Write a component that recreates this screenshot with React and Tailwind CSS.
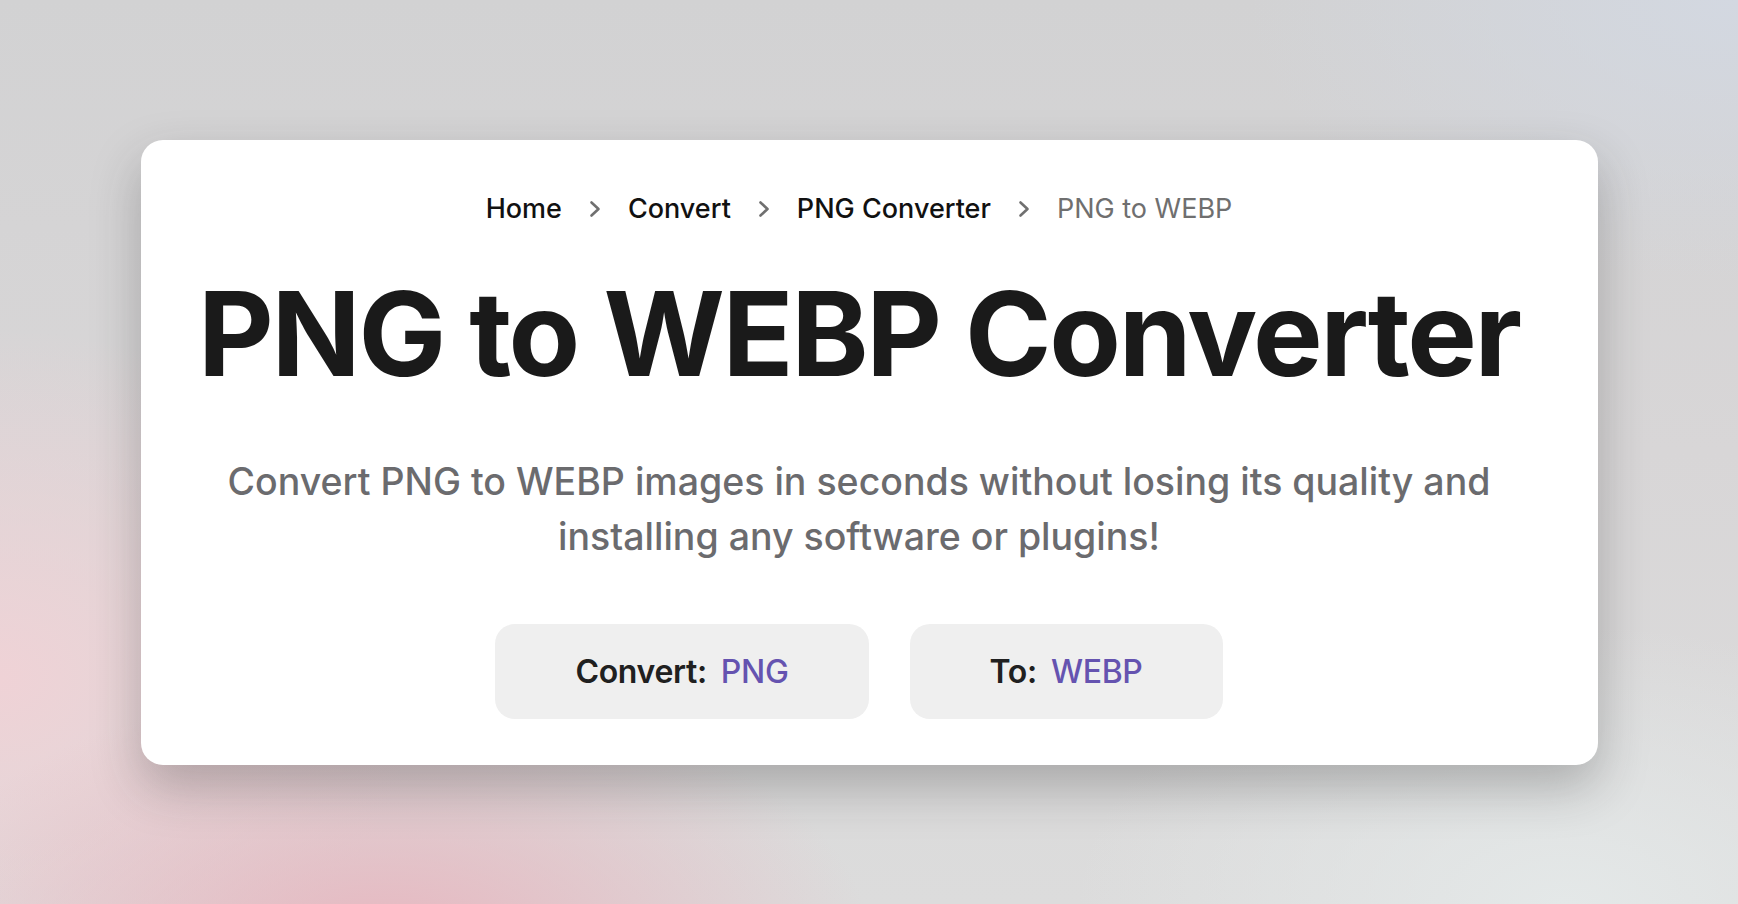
import React from "react";

const crumbs = ["Home", "Convert", "PNG Converter"];

const Chevron = () => (
  <svg width="12" height="18" viewBox="0 0 12 18" fill="none" className="shrink-0">
    <polyline points="2.5,2.5 9.5,9 2.5,15.5" stroke="#707070" strokeWidth="2.6" strokeLinecap="round" strokeLinejoin="round" />
  </svg>
);

const Picker = ({ label, value }) => (
  <button className="flex h-[95px] items-center justify-center gap-[14px] rounded-[20px] bg-[#efefef] px-[80px] text-[32px] font-semibold tracking-[-0.01em]">
    <span className="text-[#202020]">{label}</span>
    <span className="font-medium text-[#6553b0]">{value}</span>
  </button>
);

export default function App() {
  return (
    <div
      className="flex h-[904px] w-full items-start justify-center overflow-hidden bg-[radial-gradient(ellipse_700px_380px_at_22%_105%,#e7b6bf_0%,rgba(231,182,191,0)_70%),radial-gradient(ellipse_600px_500px_at_0%_75%,#efd2d6_0%,rgba(239,210,214,0)_70%),radial-gradient(ellipse_700px_400px_at_100%_0%,#d3d8e1_0%,rgba(211,216,225,0)_70%),radial-gradient(ellipse_700px_400px_at_90%_100%,#e4e8e8_0%,rgba(228,232,232,0)_70%),linear-gradient(180deg,#d2d2d3_0%,#d8d6d7_50%,#dcdcdc_100%)] pt-[140px]"
      style={{ fontFamily: "Inter, 'Noto Sans', 'Liberation Sans', sans-serif" }}
    >
      <div className="flex w-[1457px] flex-col items-center rounded-[22px] bg-white pt-[50px] pb-[46px] pr-[20px] shadow-[0_22px_50px_rgba(40,40,40,0.28)]">
        {/* Breadcrumb */}
        <nav className="flex items-center gap-[27px] text-[27px] leading-[38px] font-medium">
          {crumbs.map((c) => (
            <React.Fragment key={c}>
              <a className="text-[#111111]">{c}</a>
              <Chevron />
            </React.Fragment>
          ))}
          <span className="font-normal text-[#6f6f6f]">PNG to WEBP</span>
        </nav>

        {/* Title */}
        <h1 className="mt-[47px] text-[117px] leading-[117px] font-bold tracking-[-0.02em] text-[#1a1a1a]">
          PNG to WEBP Converter
        </h1>

        {/* Subtitle */}
        <p className="mt-[62px] max-w-[1300px] text-center text-[37.5px] leading-[55px] font-medium text-[#6b6b6e]">
          Convert PNG to WEBP images in seconds without losing its quality and installing any software or plugins!
        </p>

        {/* Pickers */}
        <div className="mt-[60px] flex gap-[41px]">
          <Picker label="Convert:" value="PNG" />
          <Picker label="To:" value="WEBP" />
        </div>
      </div>
    </div>
  );
}
